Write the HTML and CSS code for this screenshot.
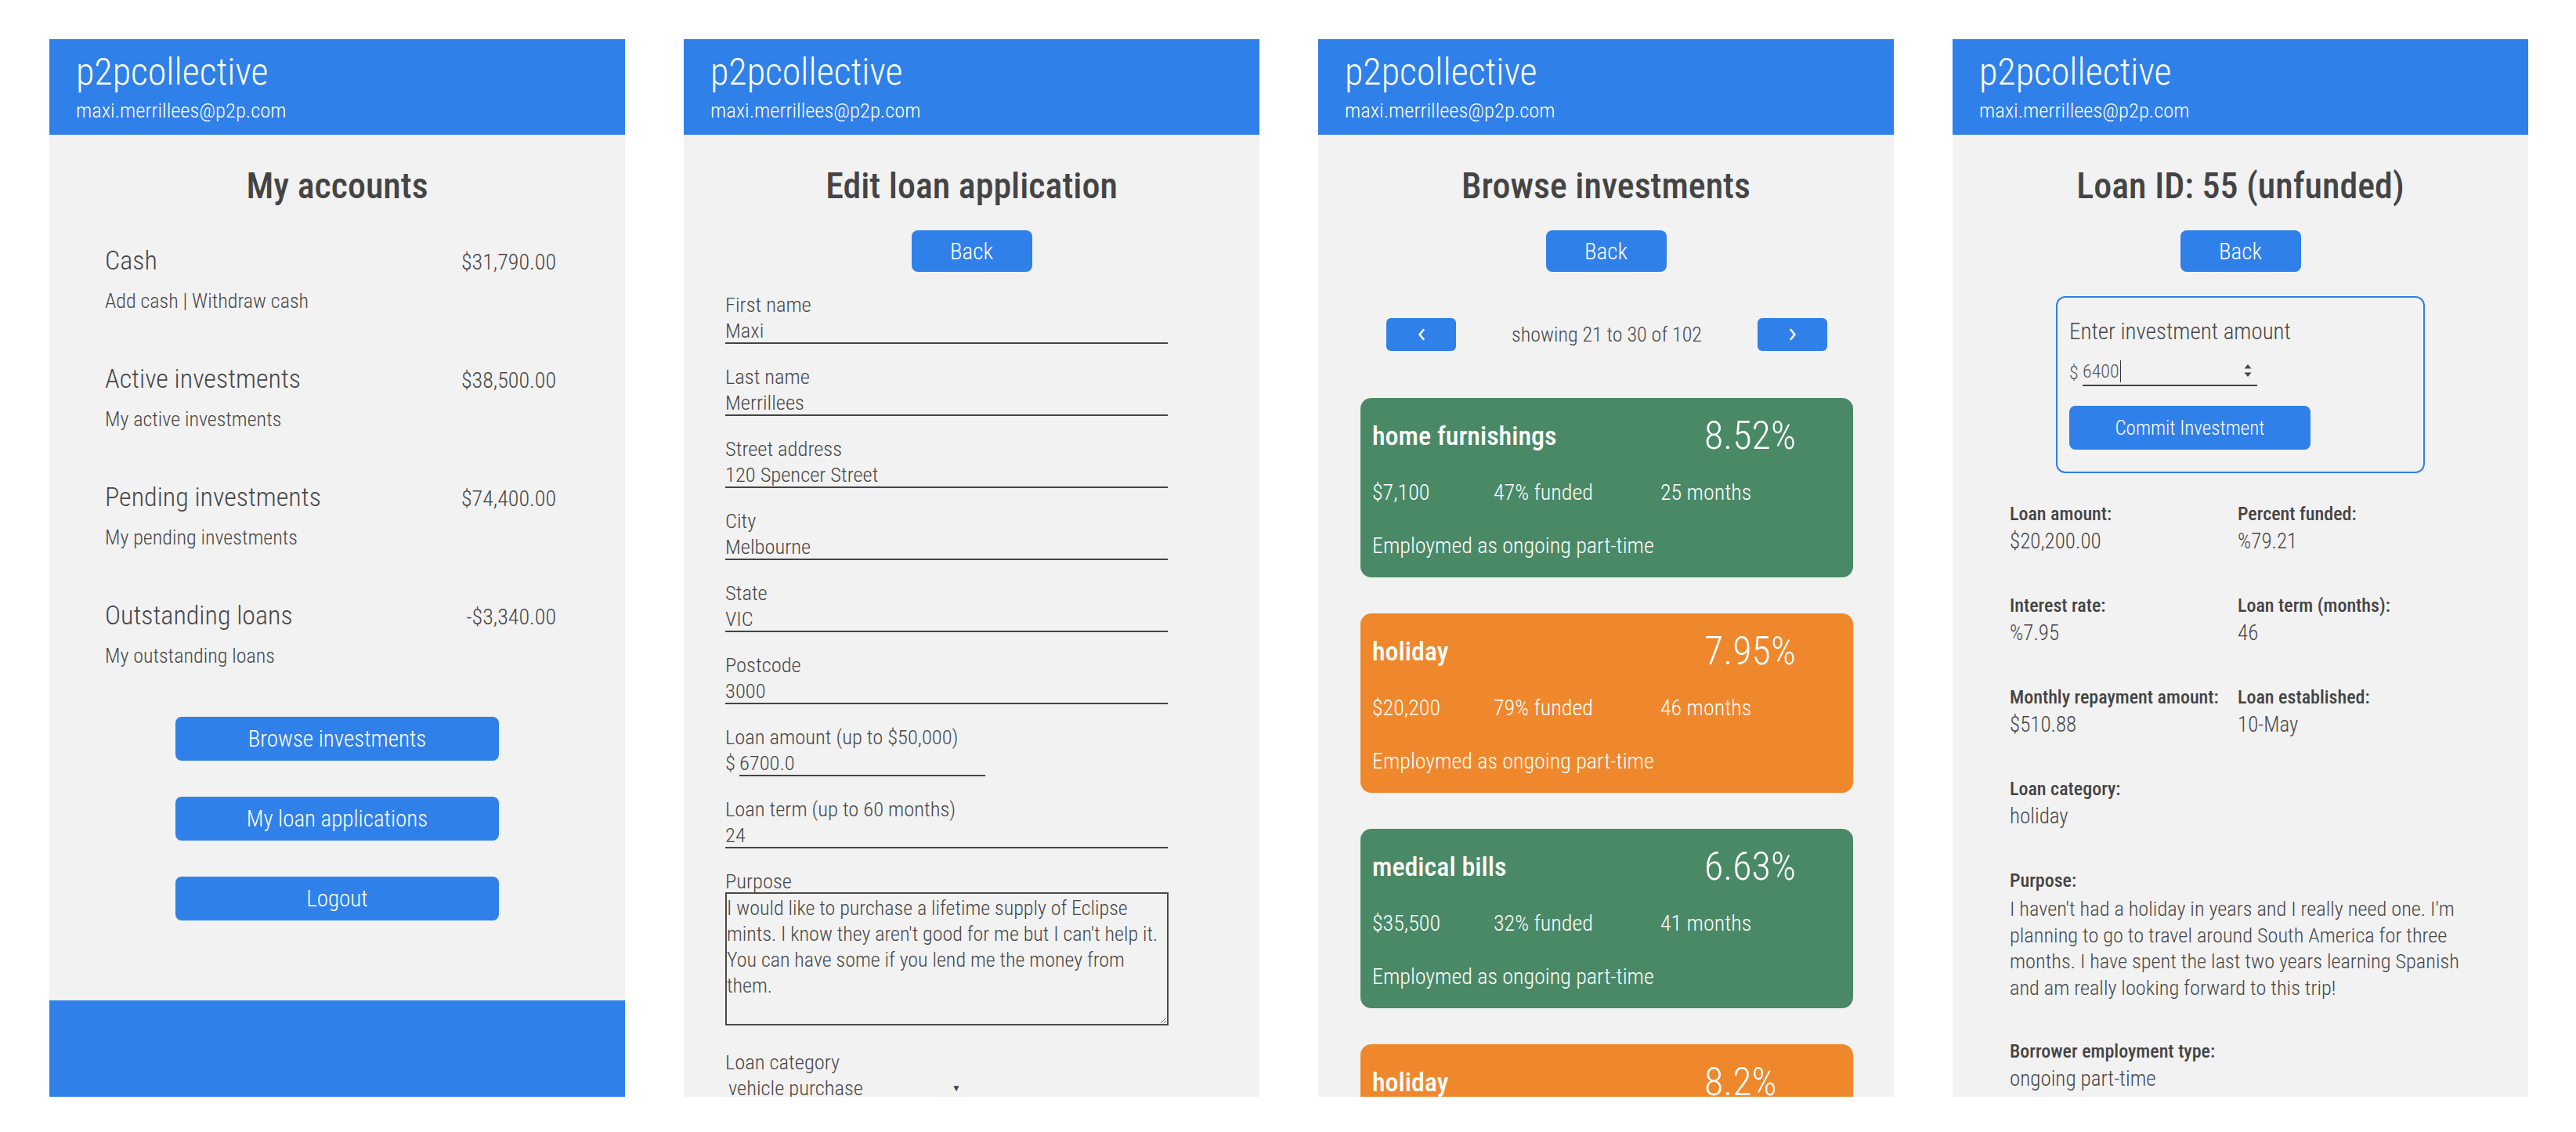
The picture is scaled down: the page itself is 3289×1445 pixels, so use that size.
FILE: index.html
```html
<!DOCTYPE html>
<html lang="en">
<head>
<meta charset="utf-8">
<title>p2pcollective</title>
<link rel="stylesheet" href="styles.css">
</head>
<body>
<div class="stage">

  <section class="phone">
    <header class="appbar">
      <div class="brand">p2pcollective</div>
      <div class="email">maxi.merrillees@p2p.com</div>
    </header>
    <main class="screen">
      <h1 class="title">My accounts</h1>
      <div class="accounts">
        <div class="acct">
          <div class="acct-head"><span class="acct-name">Cash</span><span class="acct-val">$31,790.00</span></div>
          <div class="acct-links">Add cash | Withdraw cash</div>
        </div>
        <div class="acct">
          <div class="acct-head"><span class="acct-name">Active investments</span><span class="acct-val">$38,500.00</span></div>
          <div class="acct-links">My active investments</div>
        </div>
        <div class="acct">
          <div class="acct-head"><span class="acct-name">Pending investments</span><span class="acct-val">$74,400.00</span></div>
          <div class="acct-links">My pending investments</div>
        </div>
        <div class="acct">
          <div class="acct-head"><span class="acct-name">Outstanding loans</span><span class="acct-val">-$3,340.00</span></div>
          <div class="acct-links">My outstanding loans</div>
        </div>
      </div>
      <div class="menu">
        <button class="btn btn-wide">Browse investments</button>
        <button class="btn btn-wide">My loan applications</button>
        <button class="btn btn-wide">Logout</button>
      </div>
    </main>
    <footer class="footbar"></footer>
  </section>

  <section class="phone">
    <header class="appbar">
      <div class="brand">p2pcollective</div>
      <div class="email">maxi.merrillees@p2p.com</div>
    </header>
    <main class="screen">
      <h1 class="title">Edit loan application</h1>
      <button class="btn btn-back">Back</button>
      <form class="form">
        <label class="field"><span class="f-label">First name</span><input class="f-input" type="text" value="Maxi"></label>
        <label class="field"><span class="f-label">Last name</span><input class="f-input" type="text" value="Merrillees"></label>
        <label class="field"><span class="f-label">Street address</span><input class="f-input" type="text" value="120 Spencer Street"></label>
        <label class="field"><span class="f-label">City</span><input class="f-input" type="text" value="Melbourne"></label>
        <label class="field"><span class="f-label">State</span><input class="f-input" type="text" value="VIC"></label>
        <label class="field"><span class="f-label">Postcode</span><input class="f-input" type="text" value="3000"></label>
        <label class="field"><span class="f-label">Loan amount (up to $50,000)</span><span class="money"><span class="cur">$</span><input class="f-input f-short" type="text" value="6700.0"></span></label>
        <label class="field"><span class="f-label">Loan term (up to 60 months)</span><input class="f-input" type="text" value="24"></label>
        <label class="field field-area"><span class="f-label">Purpose</span><textarea class="f-area">I would like to purchase a lifetime supply of Eclipse
mints. I know they aren't good for me but I can't help it.
You can have some if you lend me the money from
them.</textarea></label>
        <label class="field"><span class="f-label">Loan category</span><span class="f-select"><span class="sel-text">vehicle purchase</span><span class="sel-arrow">&#9660;</span></span></label>
      </form>
    </main>
  </section>

  <section class="phone">
    <header class="appbar">
      <div class="brand">p2pcollective</div>
      <div class="email">maxi.merrillees@p2p.com</div>
    </header>
    <main class="screen">
      <h1 class="title">Browse investments</h1>
      <button class="btn btn-back">Back</button>
      <div class="pager">
        <button class="btn btn-page"><svg width="12" height="18" viewBox="0 0 12 18"><polyline points="8.5,3 3.5,9 8.5,15" fill="none" stroke="#fff" stroke-width="2.6" stroke-linecap="round" stroke-linejoin="round"/></svg></button>
        <span class="pager-text">showing 21 to 30 of 102</span>
        <button class="btn btn-page"><svg width="12" height="18" viewBox="0 0 12 18"><polyline points="3.5,3 8.5,9 3.5,15" fill="none" stroke="#fff" stroke-width="2.6" stroke-linecap="round" stroke-linejoin="round"/></svg></button>
      </div>
      <div class="cards">
        <article class="card green">
          <div class="card-top"><span class="card-cat">home furnishings</span><span class="card-rate">8.52%</span></div>
          <div class="card-stats"><span class="s1">$7,100</span><span class="s2">47% funded</span><span class="s3">25 months</span></div>
          <div class="card-emp">Employmed as ongoing part-time</div>
        </article>
        <article class="card orange">
          <div class="card-top"><span class="card-cat">holiday</span><span class="card-rate">7.95%</span></div>
          <div class="card-stats"><span class="s1">$20,200</span><span class="s2">79% funded</span><span class="s3">46 months</span></div>
          <div class="card-emp">Employmed as ongoing part-time</div>
        </article>
        <article class="card green">
          <div class="card-top"><span class="card-cat">medical bills</span><span class="card-rate">6.63%</span></div>
          <div class="card-stats"><span class="s1">$35,500</span><span class="s2">32% funded</span><span class="s3">41 months</span></div>
          <div class="card-emp">Employmed as ongoing part-time</div>
        </article>
        <article class="card orange">
          <div class="card-top"><span class="card-cat">holiday</span><span class="card-rate">8.2%</span></div>
        </article>
      </div>
    </main>
  </section>

  <section class="phone">
    <header class="appbar">
      <div class="brand">p2pcollective</div>
      <div class="email">maxi.merrillees@p2p.com</div>
    </header>
    <main class="screen">
      <h1 class="title">Loan ID: 55 (unfunded)</h1>
      <button class="btn btn-back">Back</button>
      <div class="invest">
        <div class="inv-label">Enter investment amount</div>
        <div class="inv-row"><span class="cur">$</span><span class="inv-input"><span class="inv-val">6400</span><span class="caret"></span><svg class="spin" width="12" height="22" viewBox="0 0 12 22"><polygon points="6,3 10.5,8.5 1.5,8.5" fill="#444"/><polygon points="1.5,13.5 10.5,13.5 6,19" fill="#444"/></svg></span></div>
        <button class="btn btn-commit">Commit Investment</button>
      </div>
      <div class="details">
        <div class="d-item"><div class="d-label">Loan amount:</div><div class="d-val">$20,200.00</div></div>
        <div class="d-item"><div class="d-label">Percent funded:</div><div class="d-val">%79.21</div></div>
        <div class="d-item"><div class="d-label">Interest rate:</div><div class="d-val">%7.95</div></div>
        <div class="d-item"><div class="d-label">Loan term (months):</div><div class="d-val">46</div></div>
        <div class="d-item"><div class="d-label">Monthly repayment amount:</div><div class="d-val">$510.88</div></div>
        <div class="d-item"><div class="d-label">Loan established:</div><div class="d-val">10-May</div></div>
        <div class="d-item d-full"><div class="d-label">Loan category:</div><div class="d-val">holiday</div></div>
        <div class="d-item d-full"><div class="d-label">Purpose:</div><div class="d-text">I haven't had a holiday in years and I really need one. I'm planning to go to travel around South America for three months. I have spent the last two years learning Spanish and am really looking forward to this trip!</div></div>
        <div class="d-item d-full"><div class="d-label">Borrower employment type:</div><div class="d-val">ongoing part-time</div></div>
      </div>
    </main>
  </section>

</div>
</body>
</html>
```

FILE: styles.css
```css
* { box-sizing: border-box; }
html, body { margin: 0; padding: 0; background: #ffffff; }
body {
  color: #474747;
  font-family: "Roboto", "Open Sans", sans-serif;
  font-stretch: 75%;
  font-weight: 300;
}

.stage {
  display: flex;
  gap: 75px;
  padding: 50px 0 0 63px;
  align-items: flex-start;
}

.phone {
  width: 735px;
  height: 1350px;
  background: #f2f2f2;
  display: flex;
  flex-direction: column;
  overflow: hidden;
}

button, input, textarea { font-family: inherit; font-stretch: inherit; font-weight: inherit; }

/* app bar */
.appbar {
  flex: none;
  height: 122px;
  background: #3080e9;
  color: #ffffff;
  padding: 16px 34px 0;
}
.brand { font-size: 48px; line-height: 52px; font-weight: 300; }
.email { font-size: 26.5px; line-height: 30px; margin-top: 8px; font-weight: 300; }

.screen { flex: 1; display: flex; flex-direction: column; }

.title {
  margin: 35px 0 0;
  text-align: center;
  font-size: 46px;
  line-height: 60px;
  font-weight: 500;
  color: #444444;
}

.btn {
  border: none;
  background: #3080e9;
  color: #ffffff;
  border-radius: 8px;
  font-size: 29px;
  font-weight: 300;
  padding: 0;
  display: flex;
  align-items: center;
  justify-content: center;
}

/* panel 1 */
.accounts { margin-top: 45px; padding: 0 88px 0 71px; }
.acct { margin-bottom: 61px; }
.acct-head { display: flex; justify-content: space-between; align-items: baseline; height: 40px; line-height: 40px; }
.acct-name { font-size: 34px; }
.acct-val { font-size: 28px; }
.acct-links { margin-top: 14px; font-size: 26px; line-height: 36px; }

.menu { margin-top: -1px; display: flex; flex-direction: column; align-items: center; gap: 46px; }
.btn-wide { width: 413px; height: 56px; }

.footbar { flex: none; margin-top: auto; height: 123px; background: #3080e9; }

/* back */
.btn-back { align-self: center; width: 154px; height: 53px; margin-top: 27px; }

/* panel 2 form */
.form { margin-top: 28px; padding-left: 53px; display: flex; flex-direction: column; }
.field { display: flex; flex-direction: column; align-items: flex-start; margin-bottom: 28px; }
.f-label { font-size: 26.5px; line-height: 28px; }
.f-input {
  margin-top: 2px;
  width: 565px;
  height: 34px;
  border: none;
  border-bottom: 2px solid #444444;
  background: transparent;
  padding: 0;
  font-size: 26.5px;
  color: #474747;
  outline: none;
}
.money { display: flex; align-items: flex-end; margin-top: 2px; }
.money .cur { font-size: 26.5px; line-height: 34px; margin-right: 5px; }
.f-short { width: 314px; margin-top: 0; }
.f-area {
  width: 566px;
  height: 170px;
  margin: 0;
  border: 2px solid #4a4a4a;
  background: transparent;
  padding: 2px 0 0 0;
  font-size: 26px;
  line-height: 33px;
  color: #474747;
  resize: both;
  overflow: hidden;
}
.field-area { margin-bottom: 33px; }
.f-select { margin-top: 2px; width: 313px; display: flex; justify-content: space-between; align-items: center; padding-left: 4px; font-size: 26.5px; line-height: 34px; }
.sel-arrow { font-size: 12px; margin-right: 12px; color: #444; }

/* panel 3 */
.pager { margin-top: 59px; padding: 0 85px 0 87px; display: flex; justify-content: space-between; align-items: center; }
.btn-page { width: 89px; height: 42px; border-radius: 6px; }
.pager-text { font-size: 26px; }

.cards { margin-top: 60px; padding: 0 52px 0 54px; display: flex; flex-direction: column; gap: 46px; }
.card { flex: none; height: 229px; border-radius: 14px; padding: 20px 15px 0; color: #ffffff; }
.green { background: #4a8966; }
.orange { background: #ef882c; }
.card-top { display: flex; align-items: center; height: 56px; }
.card-cat { width: 424px; font-size: 34px; font-weight: 500; }
.card-rate { font-size: 50px; font-weight: 300; }
.card-stats { display: flex; margin-top: 27px; height: 36px; line-height: 36px; font-size: 28px; }
.s1 { width: 155px; }
.s2 { width: 213px; }
.card-emp { margin-top: 32px; line-height: 36px; font-size: 28px; }

/* panel 4 */
.invest {
  align-self: center;
  width: 471px;
  height: 226px;
  margin-top: 31px;
  border: 2px solid #3080e9;
  border-radius: 12px;
  padding: 28px 0 0 15px;
}
.inv-label { font-size: 29px; line-height: 30px; }
.inv-row { display: flex; align-items: flex-end; margin-top: 19px; height: 36px; }
.inv-row .cur { font-size: 24px; line-height: 34px; width: 17px; color: #555; }
.inv-input { position: relative; display: flex; align-items: center; width: 223px; height: 36px; border-bottom: 2px solid #444444; font-size: 24px; color: #555; }
.caret { width: 1px; height: 28px; background: #333; margin-left: 1px; }
.spin { position: absolute; right: 6px; top: 5px; }
.btn-commit { margin-top: 25px; width: 308px; height: 56px; font-size: 25px; }

.details {
  margin-top: 35px;
  padding: 0 66px 0 73px;
  display: grid;
  grid-template-columns: 291px 291px;
  row-gap: 47px;
}
.d-full { grid-column: 1 / -1; }
.d-label { font-size: 24px; line-height: 34px; font-weight: 500; color: #444; }
.d-val { font-size: 27px; line-height: 36px; }
.d-text { font-size: 26.3px; line-height: 33.5px; margin-top: 3px; }
```
